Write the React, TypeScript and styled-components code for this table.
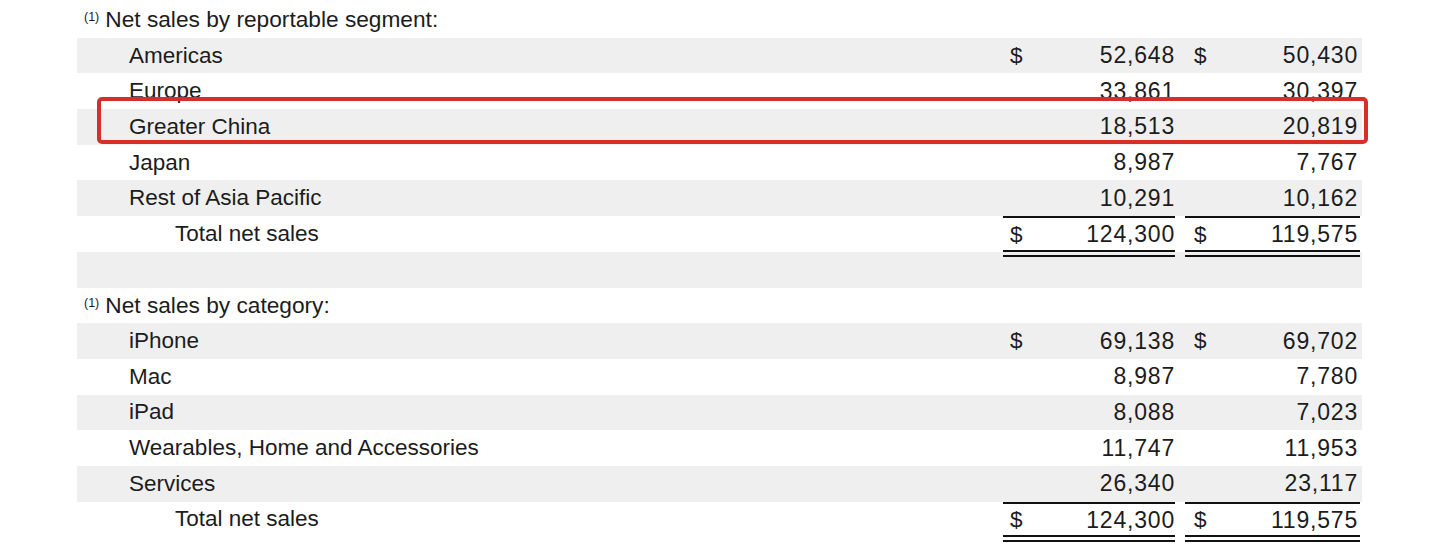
import React from 'react';
import styled, { createGlobalStyle } from 'styled-components';

const GlobalStyle = createGlobalStyle`
    html, body {
        margin: 0;
        padding: 0;
        background: #ffffff;
    }
    body {
        font-family: "Liberation Sans", Arial, sans-serif;
        color: #1c1c1c;
    }
`;

type Line = {
    label: string;
    a: string;
    b: string;
    dollar?: boolean;
    total?: boolean;
};

const segments: Line[] = [
    { label: 'Americas', a: '52,648', b: '50,430', dollar: true },
    { label: 'Europe', a: '33,861', b: '30,397' },
    { label: 'Greater China', a: '18,513', b: '20,819' },
    { label: 'Japan', a: '8,987', b: '7,767' },
    { label: 'Rest of Asia Pacific', a: '10,291', b: '10,162' },
    { label: 'Total net sales', a: '124,300', b: '119,575', dollar: true, total: true },
];

const categories: Line[] = [
    { label: 'iPhone', a: '69,138', b: '69,702', dollar: true },
    { label: 'Mac', a: '8,987', b: '7,780' },
    { label: 'iPad', a: '8,088', b: '7,023' },
    { label: 'Wearables, Home and Accessories', a: '11,747', b: '11,953' },
    { label: 'Services', a: '26,340', b: '23,117' },
    { label: 'Total net sales', a: '124,300', b: '119,575', dollar: true, total: true },
];

const renderRows = (rows: Line[]) =>
    rows.map((r, i) => (
        <Row key={r.label + i} $shaded={i % 2 === 0}>
            <Label $total={r.total}>{r.label}</Label>
            <Amount $total={r.total} $first>
                <Dollar>{r.dollar ? '$' : ''}</Dollar>
                <Num>{r.a}</Num>
            </Amount>
            <Amount $total={r.total}>
                <Dollar>{r.dollar ? '$' : ''}</Dollar>
                <Num>{r.b}</Num>
            </Amount>
        </Row>
    ));

const App = () => {
    return (
        <>
            <GlobalStyle />
            <Page>
                <Sheet>
                    <Heading>
                        <Note>(1)</Note>Net sales by reportable segment:
                    </Heading>
                    {renderRows(segments)}
                    <Row $shaded />
                    <Heading>
                        <Note>(1)</Note>Net sales by category:
                    </Heading>
                    {renderRows(categories)}
                </Sheet>
                <Highlight />
            </Page>
        </>
    );
};

export default App;

const Page = styled.div`
    position: relative;
    width: 1438px;
    height: 546px;
    overflow: hidden;
    padding-top: 2px;
    box-sizing: border-box;
`;

const Sheet = styled.div`
    margin-left: 77px;
    width: 1285px;
    display: flex;
    flex-direction: column;
`;

const Heading = styled.div`
    height: 35.7px;
    display: flex;
    align-items: center;
    padding-left: 7px;
    font-size: 22.7px;
    color: #1c1c1c;
`;

const Note = styled.span`
    font-size: 12.5px;
    align-self: flex-start;
    margin-top: 8px;
    margin-right: 6px;
`;

const Row = styled.div<{ $shaded?: boolean }>`
    height: 35.7px;
    display: grid;
    grid-template-columns: 916px 172px 175px;
    column-gap: 10px;
    background: ${(p) => (p.$shaded ? '#efefef' : 'transparent')};
    font-size: 22.5px;
`;

const Label = styled.div<{ $total?: boolean }>`
    display: flex;
    align-items: center;
    padding-left: ${(p) => (p.$total ? '98px' : '52px')};
    white-space: nowrap;
`;

const Amount = styled.div<{ $total?: boolean; $first?: boolean }>`
    position: relative;
    display: flex;
    align-items: center;
    justify-content: space-between;
    padding-left: ${(p) => (p.$first ? '7px' : '9px')};
    padding-right: ${(p) => (p.$first ? '0px' : '2px')};
    box-sizing: border-box;
    border-top: ${(p) => (p.$total ? '2px solid #111' : 'none')};

    &::after {
        content: '';
        display: ${(p) => (p.$total ? 'block' : 'none')};
        position: absolute;
        left: 0;
        right: 0;
        top: calc(100% - 2px);
        height: 3px;
        border-top: 2px solid #111;
        border-bottom: 2px solid #111;
        z-index: 1;
    }
`;

const Dollar = styled.span`
    width: 14px;
`;

const Num = styled.span`
    font-size: 23px;
    letter-spacing: 0.8px;
`;

const Highlight = styled.div`
    position: absolute;
    left: 97px;
    top: 97px;
    width: 1271px;
    height: 47px;
    box-sizing: border-box;
    border: 4px solid #d52f2a;
    border-radius: 5px;
    pointer-events: none;
`;
